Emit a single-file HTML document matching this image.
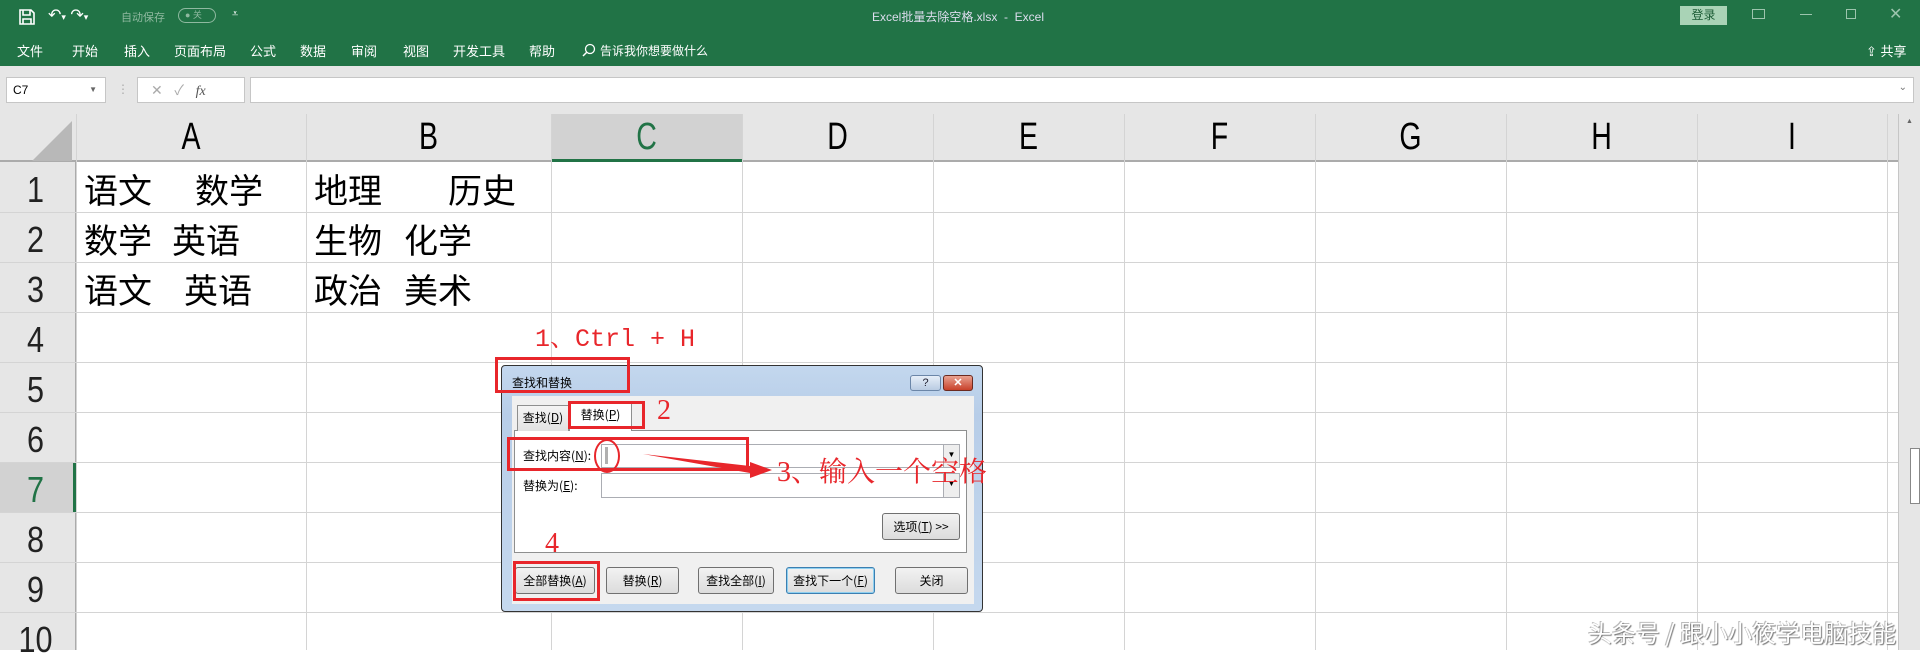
<!DOCTYPE html>
<html><head><meta charset="utf-8"><style>
*{margin:0;padding:0;box-sizing:border-box}
body{width:1920px;height:650px;overflow:hidden;background:#fff;position:relative;font-family:"Liberation Sans","Noto Sans CJK SC",sans-serif}
.a{position:absolute;white-space:nowrap}
.g{background:#217346}
.tab{color:#fff;font-size:13px;top:41px}
.ch{font-size:38px;top:116px;text-align:center;color:#000;transform:scaleX(.75)}
.rn{font-size:36px;left:0;width:71px;text-align:center;color:#222;transform:scaleX(.85)}
.ct{font-size:34px;font-family:"Noto Sans CJK SC",sans-serif;color:#000}
.btn{position:absolute;border:1px solid #707070;border-radius:3px;background:linear-gradient(#f2f2f2,#dcdcdc);font-size:12px;text-align:center;line-height:25px;color:#000;font-family:"Noto Sans CJK SC",sans-serif}
.red{position:absolute;border:3px solid #e8262b}
.rt{position:absolute;color:#e8262b;font-family:"Liberation Serif","Noto Serif CJK SC",serif;white-space:nowrap}
.dl{font-size:12px;font-family:"Noto Sans CJK SC",sans-serif;color:#000}
</style></head><body>
<div class="a g" style="left:0;top:0;width:1920px;height:66px"></div>
<svg class="a" style="left:18px;top:8px" width="18" height="18" viewBox="0 0 18 18"><path d="M2 2h11l3 3v11H2z M5 2v5h7V2 M5 16v-5h8v5" fill="none" stroke="#fff" stroke-width="1.6"/></svg>
<div class="a" style="left:48px;top:5px;color:#fff;font-size:16px">↶<span style="font-size:9px">▾</span> ↷<span style="font-size:9px">▾</span></div>
<div class="a" style="left:121px;top:9px;color:#8fb9a0;font-size:11px">自动保存</div>
<div class="a" style="left:178px;top:8px;width:38px;height:15px;border:1px solid #8fb9a0;border-radius:8px;color:#8fb9a0;font-size:9px;line-height:13px;padding-left:6px">● 关</div>
<div class="a" style="left:232px;top:8px;color:#fff;font-size:11px">⩡</div>
<div class="a" style="left:872px;top:8px;color:#dde;font-size:12px">Excel批量去除空格.xlsx &nbsp;- &nbsp;Excel</div>
<div class="a" style="left:1680px;top:6px;width:47px;height:19px;background:#a9d3b6;color:#1c5c35;font-size:12px;text-align:center;line-height:19px">登录</div>
<div class="a" style="left:1752px;top:9px;width:13px;height:10px;border:1px solid #9cc4ad"></div>
<div class="a" style="left:1800px;top:14px;width:12px;height:1px;background:#9cc4ad"></div>
<div class="a" style="left:1846px;top:9px;width:10px;height:10px;border:1px solid #9cc4ad"></div>
<div class="a" style="left:1889px;top:4px;color:#9cc4ad;font-size:16px">✕</div>
<div class="a tab" style="left:17px">文件</div>
<div class="a tab" style="left:72px">开始</div>
<div class="a tab" style="left:124px">插入</div>
<div class="a tab" style="left:174px">页面布局</div>
<div class="a tab" style="left:250px">公式</div>
<div class="a tab" style="left:300px">数据</div>
<div class="a tab" style="left:351px">审阅</div>
<div class="a tab" style="left:403px">视图</div>
<div class="a tab" style="left:453px">开发工具</div>
<div class="a tab" style="left:529px">帮助</div>
<svg class="a" style="left:582px;top:43px" width="14" height="14"><circle cx="8" cy="6" r="4.5" fill="none" stroke="#fff" stroke-width="1.3"/><path d="M5 9L1 13" stroke="#fff" stroke-width="1.5"/></svg>
<div class="a tab" style="left:600px;font-size:12px;top:42px">告诉我你想要做什么</div>
<div class="a tab" style="left:1866px">⇪ 共享</div>
<div class="a" style="left:0;top:66px;width:1920px;height:48px;background:#e6e6e6"></div>
<div class="a" style="left:6px;top:77px;width:100px;height:26px;background:#fff;border:1px solid #c6c6c6;font-size:12px;line-height:24px;padding-left:6px">C7<span style="position:absolute;right:8px;font-size:8px;color:#666">▼</span></div>
<div class="a" style="left:117px;top:82px;color:#aaa;font-size:12px">⋮</div>
<div class="a" style="left:137px;top:77px;width:108px;height:26px;background:#fff;border:1px solid #c6c6c6;color:#aaa;font-size:14px;line-height:24px;padding-left:13px">✕ &nbsp; ✓ &nbsp; <i style="font-family:'Liberation Serif';color:#555">fx</i></div>
<div class="a" style="left:250px;top:77px;width:1664px;height:26px;background:#fff;border:1px solid #c6c6c6"><span style="position:absolute;right:6px;top:4px;font-size:10px;color:#777">⌄</span></div>
<div class="a" style="left:0;top:114px;width:1898px;height:48px;background:#e6e6e6;border-bottom:2px solid #ababab"></div>
<svg class="a" style="left:32px;top:121px" width="40" height="40"><path d="M40 0V40H0z" fill="#b8b8b8"/></svg>
<div class="a" style="left:551px;top:114px;width:191px;height:48px;background:#d2d2d2;border-bottom:3px solid #217346"></div>
<div class="a" style="left:0;top:162px;width:76px;height:488px;background:#e6e6e6;border-right:1px solid #ababab"></div>
<div class="a" style="left:0;top:462px;width:76px;height:50px;background:#d2d2d2;border-right:3px solid #217346"></div>
<svg class="a" style="left:0;top:114px" width="1898" height="536">
<g stroke="#d4d4d4" stroke-width="1">
<path d="M76.5 0V536M306.5 0V536M551.5 0V536M742.5 0V536M933.5 0V536M1124.5 0V536M1315.5 0V536M1506.5 0V536M1697.5 0V536M1887.5 0V536"/>
<path d="M0 98.5H1898M0 148.5H1898M0 198.5H1898M0 248.5H1898M0 298.5H1898M0 348.5H1898M0 398.5H1898M0 448.5H1898M0 498.5H1898"/>
</g></svg>
<div class="a ch" style="left:76px;width:230px">A</div>
<div class="a ch" style="left:306px;width:245px">B</div>
<div class="a ch" style="left:551px;width:191px;color:#217346">C</div>
<div class="a ch" style="left:742px;width:191px">D</div>
<div class="a ch" style="left:933px;width:191px">E</div>
<div class="a ch" style="left:1124px;width:191px">F</div>
<div class="a ch" style="left:1315px;width:191px">G</div>
<div class="a ch" style="left:1506px;width:191px">H</div>
<div class="a ch" style="left:1697px;width:190px">I</div>
<div class="a rn" style="top:169px">1</div>
<div class="a rn" style="top:219px">2</div>
<div class="a rn" style="top:269px">3</div>
<div class="a rn" style="top:319px">4</div>
<div class="a rn" style="top:369px">5</div>
<div class="a rn" style="top:419px">6</div>
<div class="a rn" style="top:469px;color:#217346">7</div>
<div class="a rn" style="top:519px">8</div>
<div class="a rn" style="top:569px">9</div>
<div class="a rn" style="top:619px">10</div>
<div class="a ct" style="left:84px;top:164px">语文</div><div class="a ct" style="left:195px;top:164px">数学</div>
<div class="a ct" style="left:314px;top:164px">地理</div><div class="a ct" style="left:448px;top:164px">历史</div>
<div class="a ct" style="left:84px;top:214px">数学</div><div class="a ct" style="left:172px;top:214px">英语</div>
<div class="a ct" style="left:314px;top:214px">生物</div><div class="a ct" style="left:404px;top:214px">化学</div>
<div class="a ct" style="left:84px;top:264px">语文</div><div class="a ct" style="left:184px;top:264px">英语</div>
<div class="a ct" style="left:314px;top:264px">政治</div><div class="a ct" style="left:404px;top:264px">美术</div>
<div class="a" style="left:1898px;top:114px;width:22px;height:536px;background:#e6e6e6;border-left:1px solid #c6c6c6"></div>
<div class="a" style="left:1906px;top:118px;font-size:7px;color:#666">▲</div>
<div class="a" style="left:1910px;top:448px;width:10px;height:56px;background:#fff;border:1px solid #888"></div>
<div class="a" style="left:501px;top:365px;width:482px;height:247px;background:linear-gradient(#c3d7ee,#b7cde8 20%,#c5d8ee);border:1px solid #333;border-radius:4px"></div>
<div class="a dl" style="left:512px;top:374px">查找和替换</div>
<div class="a" style="left:910px;top:375px;width:31px;height:16px;border:1px solid #6b86a8;border-radius:3px;background:linear-gradient(#e6eef8,#b9cbe2);font-size:11px;text-align:center;line-height:14px;color:#223">?</div>
<div class="a" style="left:943px;top:375px;width:30px;height:16px;border:1px solid #6b2a20;border-radius:3px;background:linear-gradient(#e9a291,#c8412a);font-size:11px;text-align:center;line-height:14px;color:#fff;font-weight:bold">✕</div>
<div class="a" style="left:512px;top:396px;width:462px;height:208px;background:#f0f0f0"></div>
<div class="a" style="left:514px;top:430px;width:453px;height:123px;background:#fff;border:1px solid #8e8f8f"></div>
<div class="a dl" style="left:517px;top:405px;width:52px;height:26px;border:1px solid #8e8f8f;border-bottom:none;background:linear-gradient(#f4f4f4,#e2e2e2);line-height:24px;text-align:center">查找(<u>D</u>)</div>
<div class="a dl" style="left:569px;top:401px;width:63px;height:30px;border:1px solid #8e8f8f;border-bottom:none;background:#fff;line-height:26px;text-align:center">替换(<u>P</u>)</div>
<div class="a dl" style="left:523px;top:447px">查找内容(<u>N</u>):</div>
<div class="a" style="left:601px;top:444px;width:359px;height:24px;border:1px solid #abadb3;background:#fff"></div>
<div class="a" style="left:605px;top:447px;width:3px;height:17px;background:#b0b0b0"></div>
<div class="a" style="left:943px;top:445px;width:16px;height:22px;border-left:1px solid #abadb3;background:#eee;font-size:8px;text-align:center;line-height:20px">▼</div>
<div class="a dl" style="left:523px;top:477px">替换为(<u>E</u>):</div>
<div class="a" style="left:601px;top:473px;width:359px;height:25px;border:1px solid #abadb3;background:#fff"></div>
<div class="a" style="left:943px;top:474px;width:16px;height:23px;border-left:1px solid #abadb3;background:#eee;font-size:8px;text-align:center;line-height:20px">▼</div>
<div class="btn" style="left:882px;top:513px;width:78px;height:27px">选项(<u>T</u>) &gt;&gt;</div>
<div class="btn" style="left:515px;top:567px;width:80px;height:27px">全部替换(<u>A</u>)</div>
<div class="btn" style="left:606px;top:567px;width:73px;height:27px">替换(<u>R</u>)</div>
<div class="btn" style="left:698px;top:567px;width:76px;height:27px">查找全部(<u>I</u>)</div>
<div class="btn" style="left:786px;top:567px;width:89px;height:27px;border-color:#3c7fb1;box-shadow:inset 0 0 0 1px #8fd0f0">查找下一个(<u>F</u>)</div>
<div class="btn" style="left:895px;top:567px;width:73px;height:27px">关闭</div>
<div class="rt" style="left:535px;top:318px;font-size:25px;font-family:'Liberation Mono','Noto Serif CJK SC',monospace">1、Ctrl + H</div>
<div class="red" style="left:495px;top:357px;width:135px;height:36px"></div>
<div class="red" style="left:568px;top:401px;width:77px;height:28px"></div>
<div class="rt" style="left:657px;top:395px;font-size:28px">2</div>
<div class="red" style="left:507px;top:437px;width:242px;height:34px"></div>
<svg class="a" style="left:590px;top:436px" width="200" height="44"><ellipse cx="17" cy="20" rx="12" ry="16" fill="none" stroke="#e8262b" stroke-width="2"/><path d="M53 18L160 30L160 26L182 34L160 42L160 37Z" fill="#e8262b"/></svg>
<div class="rt" style="left:777px;top:450px;font-size:28px">3、输入一个空格</div>
<div class="rt" style="left:545px;top:528px;font-size:28px">4</div>
<div class="red" style="left:513px;top:561px;width:87px;height:40px"></div>
<div class="a" style="left:1588px;top:614px;font-size:24px;color:#fff;text-shadow:1px 1px 1px #777,-1px -1px 0 #bbb;font-family:'Noto Sans CJK SC',sans-serif">头条号 / 跟小小筱学电脑技能</div>
</body></html>
